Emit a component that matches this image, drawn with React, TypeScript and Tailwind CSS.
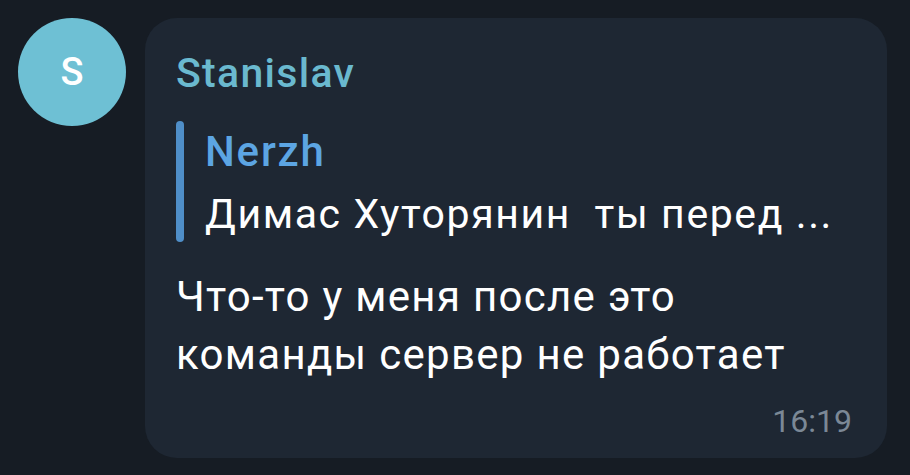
export default function App() {
  return (
    <div
      className="w-[910px] h-[475px] bg-[#161c24] flex items-start pt-[18px] pl-[18px] overflow-hidden"
      style={{ fontFamily: "Roboto, 'Noto Sans', sans-serif" }}
    >
      <div className="w-[108px] h-[108px] rounded-full bg-[#6ec0d4] flex items-center justify-center shrink-0">
        <span className="text-white text-[38px] font-medium leading-none">S</span>
      </div>
      <div className="ml-[19px] w-[742px] h-[440px] rounded-[32px] bg-[#1e2733] pl-[31px] pr-[35px] pt-[31px] pb-[14px] flex flex-col">
        <div className="text-[41px] leading-[48px] font-medium tracking-[1.3px] text-[#6ab9cf]">Stanislav</div>
        <div className="mt-[24px] flex">
          <div className="w-[8px] h-[121px] rounded-full bg-[#4f8ec8] shrink-0" />
          <div className="ml-[21px] pt-[7px]">
            <div className="text-[42px] leading-[48px] font-medium tracking-[1.8px] text-[#5ca5e3]">Nerzh</div>
            <div className="mt-[14px] text-[41px] leading-[48px] tracking-[1.6px] text-white whitespace-pre">
              {"Димас Хуторянин  ты перед ..."}
            </div>
          </div>
        </div>
        <div className="mt-[26px] text-[42px] leading-[58px] tracking-[1.3px] text-white">
          Что-то у меня после это
          <br />
          команды сервер не работает
        </div>
        <div className="mt-[17px] text-[32px] leading-[40px] text-[#7b8896] text-right">16:19</div>
      </div>
    </div>
  );
}
